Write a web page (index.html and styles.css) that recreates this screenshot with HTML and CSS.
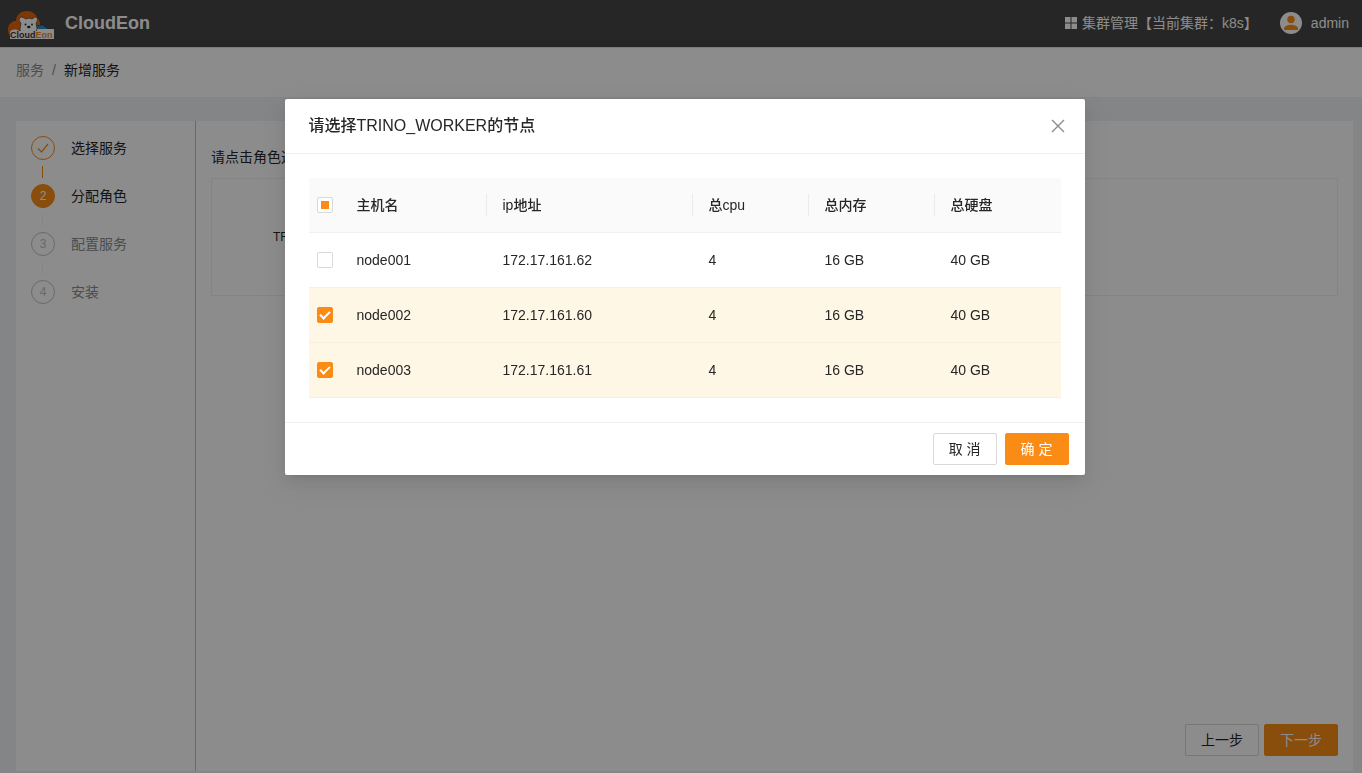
FILE: index.html
```html
<!DOCTYPE html>
<html lang="zh-CN">
<head>
<meta charset="utf-8">
<meta name="viewport" content="width=device-width, initial-scale=1">
<title>CloudEon</title>
<link rel="stylesheet" href="styles.css">
</head>
<body>
<div class="app">
  <header class="topbar">
    <a class="brand" href="#">
      <svg class="logo" viewBox="0 0 48 32" width="48" height="32" aria-hidden="true">
        <path d="M3 28C-1 25-1 16 3 14c2-2 3-2 5-2C8 6 13 2 19 2c5 0 9 3 11 8 3 3 3 9 0 14L24 28Z" fill="#e8640a"/>
        <path d="M25 21c0-4 3-6 6-4 2-2 6-1 6 1 3 0 3 2 2 3Z" fill="#2f8fc4" stroke="#1b3a50" stroke-width=".8"/>
        <path d="M13 14c-3-2-2-6 1-6l4 2c2-1 4-1 6 0l3-2c3 0 3 4 1 6l1 6c0 2-2 3-5 3h-7c-4 0-5-1-5-3Z" fill="#fff" stroke="#333" stroke-width=".6"/>
        <circle cx="17.500" cy="15.500" r=".9" fill="#222"/><circle cx="24" cy="15.500" r=".9" fill="#222"/>
        <ellipse cx="20.800" cy="18" rx="1.700" ry="1.200" fill="#222"/>
        <path d="M2 30V23c2-3 6-3 9-1h2c1-2 4-2 5 0h5c1-2 4-2 5 0h1v-2h17v10Z" fill="#fff"/>
        <text x="2" y="29" class="logo-text" fill="#5a2c18">Cloud<tspan fill="#f08c1e">Eon</tspan></text>
      </svg>
      <span class="brand-name">CloudEon</span>
    </a>
    <nav class="tools">
      <a class="tool" href="#">
        <svg width="12" height="12" viewBox="0 0 12 12" fill="currentColor" aria-hidden="true"><path d="M0 0h5.500v5.500H0zM6.500 0H12v5.500H6.500zM0 6.500h5.500V12H0zM6.500 6.500H12V12H6.500z"/></svg>
        <span>集群管理【当前集群：k8s】</span>
      </a>
      <a class="user" href="#">
        <svg width="22" height="22" viewBox="0 0 22 22" aria-hidden="true"><circle cx="11" cy="11" r="11" fill="#fff"/><circle cx="11" cy="7.500" r="3.700" fill="#fa8c16"/><path d="M4 18v-1.500c0-2.500 4.500-3.700 7-3.700s7 1.200 7 3.700V18Z" fill="#fa8c16"/></svg>
        <span>admin</span>
      </a>
    </nav>
  </header>
  <nav class="crumbs"><a href="#">服务</a><span class="slash">/</span><span class="current">新增服务</span></nav>
  <main class="content">
    <div class="card">
      <ol class="steps">
        <li class="step done"><span class="dot"><svg width="14" height="14" viewBox="0 0 14 14" fill="none" stroke="currentColor" stroke-width="1.200" aria-hidden="true"><path d="M2 7.500 5.500 11 12 3"/></svg></span>选择服务</li>
        <li class="step active"><span class="dot">2</span>分配角色</li>
        <li class="step"><span class="dot">3</span>配置服务</li>
        <li class="step"><span class="dot">4</span>安装</li>
      </ol>
      <section class="panel">
        <p class="hint">请点击角色选择节点</p>
        <div class="roles"><span class="role">TRINO_WORKER</span></div>
        <div class="actions">
          <button class="btn" type="button">上一步</button>
          <button class="btn primary" type="button">下一步</button>
        </div>
      </section>
    </div>
  </main>
</div>

<div class="mask">
  <div class="modal" role="dialog" aria-modal="true" aria-labelledby="modal-title">
    <div class="modal-head">
      <h2 id="modal-title">请选择TRINO_WORKER的节点</h2>
      <button class="close" type="button" aria-label="关闭"><svg width="14" height="14" viewBox="0 0 14 14" fill="none" stroke="currentColor" stroke-width="1.400" aria-hidden="true"><path d="m1 1 12 12M13 1 1 13"/></svg></button>
    </div>
    <div class="modal-body">
      <table class="nodes">
        <colgroup><col class="c-check"><col class="c-name"><col class="c-ip"><col class="c-cpu"><col class="c-mem"><col class="c-disk"></colgroup>
        <thead>
          <tr><th class="pick"><input class="check partial" type="checkbox" aria-label="全选" aria-checked="mixed"></th><th class="split">主机名</th><th class="split">ip地址</th><th class="split">总cpu</th><th class="split">总内存</th><th>总硬盘</th></tr>
        </thead>
        <tbody>
          <tr><td class="pick"><input class="check" type="checkbox" aria-label="node001"></td><td>node001</td><td>172.17.161.62</td><td>4</td><td>16 GB</td><td>40 GB</td></tr>
          <tr class="selected"><td class="pick"><input class="check" type="checkbox" checked aria-label="node002"></td><td>node002</td><td>172.17.161.60</td><td>4</td><td>16 GB</td><td>40 GB</td></tr>
          <tr class="selected"><td class="pick"><input class="check" type="checkbox" checked aria-label="node003"></td><td>node003</td><td>172.17.161.61</td><td>4</td><td>16 GB</td><td>40 GB</td></tr>
        </tbody>
      </table>
    </div>
    <div class="modal-foot">
      <button class="btn" type="button">取 消</button>
      <button class="btn primary" type="button">确 定</button>
    </div>
  </div>
</div>
</body>
</html>
```
FILE: styles.css
```css
* { box-sizing: border-box; }

body {
  margin: 0;
  font: 14px/22px "Liberation Sans", "Noto Sans CJK SC", sans-serif;
  color: #262626;
  background: #f0f2f5;
}

a { color: inherit; text-decoration: none; }

.app { display: flex; flex-direction: column; min-height: 100vh; }

.topbar {
  display: flex;
  align-items: center;
  justify-content: space-between;
  height: 47px;
  padding: 0 13px 1px 8px;
  color: #fff;
  background: #454545;
}

.brand, .tools, .tool, .user { display: flex; align-items: center; }
.brand { gap: 9px; }
.logo { margin-top: 3px; }
.logo-text { font: bold 9px "Liberation Sans", sans-serif; }
.brand-name { font-size: 18px; font-weight: 700; }
.tools { gap: 22px; }
.tool { gap: 5px; }
.user { gap: 9px; }

.crumbs {
  display: flex;
  align-items: center;
  gap: 8px;
  height: 50px;
  padding: 0 16px 5px;
  background: #fff;
  border-top: 1px solid #e0e0e0;
}

.crumbs a, .slash { color: #8c8c8c; }

.content { display: flex; flex: 1; padding: 24px 9px 2px 16px; }
.card { display: flex; flex: 1; background: #fff; }

.steps {
  width: 180px;
  margin: 0;
  padding: 15px;
  list-style: none;
  border-right: 1px solid #bfbfbf;
}

.step {
  display: grid;
  grid-template-columns: 24px 1fr;
  grid-template-rows: 24px 12px;
  align-items: center;
  column-gap: 16px;
  row-gap: 6px;
  height: 48px;
  color: #8c8c8c;
}

.step:not(:last-child)::after {
  content: "";
  width: 1px;
  height: 12px;
  margin-left: 11px;
  background: #f0f0f0;
}

.step.done, .step.active { color: #262626; }
.step.done:not(:last-child)::after { background: #fa8c16; }

.dot {
  display: flex;
  align-items: center;
  justify-content: center;
  height: 24px;
  font-size: 12px;
  color: #bfbfbf;
  border: 1px solid #bfbfbf;
  border-radius: 50%;
}

.done .dot { color: #fa8c16; border-color: #fa8c16; }
.active .dot { color: #fff; background: #fa8c16; border-color: #fa8c16; }

.panel { display: flex; flex: 1; flex-direction: column; padding: 25px 15px 15px; }
.hint { margin: 0 0 10px; }

.roles {
  display: flex;
  align-items: center;
  height: 118px;
  padding: 0 61px;
  border: 1px solid #f0f0f0;
}

.role { font-size: 12px; }
.actions { display: flex; justify-content: flex-end; gap: 5px; margin-top: auto; }

.btn {
  height: 32px;
  padding: 0 15px;
  font: inherit;
  color: #262626;
  background: #fff;
  border: 1px solid #d9d9d9;
  border-radius: 2px;
}

.btn.primary { color: #fff; background: #fa8c16; border-color: #fa8c16; }

.mask {
  position: fixed;
  inset: 0;
  display: flex;
  align-items: flex-start;
  justify-content: center;
  padding: 99px 0 24px 7px;
  overflow: auto;
  background: rgba(0, 0, 0, .45);
}

.modal {
  width: 800px;
  background: #fff;
  border-radius: 2px;
  box-shadow: 0 3px 6px -4px rgba(0, 0, 0, .12), 0 6px 16px rgba(0, 0, 0, .08), 0 9px 28px 8px rgba(0, 0, 0, .05);
}

.modal-head {
  display: flex;
  align-items: center;
  justify-content: space-between;
  height: 55px;
  padding: 0 20px 0 24px;
  border-bottom: 1px solid #f0f0f0;
}

.modal-head h2 { margin: 0; font-size: 16px; font-weight: 500; }

.close { display: flex; padding: 0; color: #8c8c8c; background: none; border: 0; }
.modal-body { padding: 24px; }

.nodes { width: 100%; table-layout: fixed; border-collapse: separate; border-spacing: 0; }
.c-check { width: 32px; }
.c-name { width: 146px; }
.c-ip { width: 206px; }
.c-cpu { width: 116px; }
.c-mem, .c-disk { width: 126px; }

.nodes th, .nodes td {
  height: 55px;
  padding: 0 16px;
  text-align: left;
  font-weight: 400;
  border-bottom: 1px solid #f0f0f0;
}

.nodes th { font-weight: 500; background: #fafafa; }

.nodes th.split {
  background: linear-gradient(#ebebeb, #ebebeb) right center / 1px 22px no-repeat #fafafa;
}

.nodes .pick { padding: 0 8px; }
.nodes .selected td { background: #fff7e6; border-color: #f8f0df; }

.check {
  appearance: none;
  display: block;
  width: 16px;
  height: 16px;
  margin: 0;
  background: #fff;
  border: 1px solid #d9d9d9;
  border-radius: 2px;
}

.check.partial { background: linear-gradient(#fa8c16, #fa8c16) center / 8px 8px no-repeat #fff; }

.check:checked { display: grid; place-items: center; background: #fa8c16; border-color: #fa8c16; }

.check:checked::after {
  content: "";
  box-sizing: border-box;
  width: 6px;
  height: 10px;
  margin-bottom: 2px;
  border: solid #fff;
  border-width: 0 2px 2px 0;
  transform: rotate(45deg);
}

.modal-foot {
  display: flex;
  justify-content: flex-end;
  gap: 8px;
  padding: 10px 16px;
  border-top: 1px solid #f0f0f0;
}
```
